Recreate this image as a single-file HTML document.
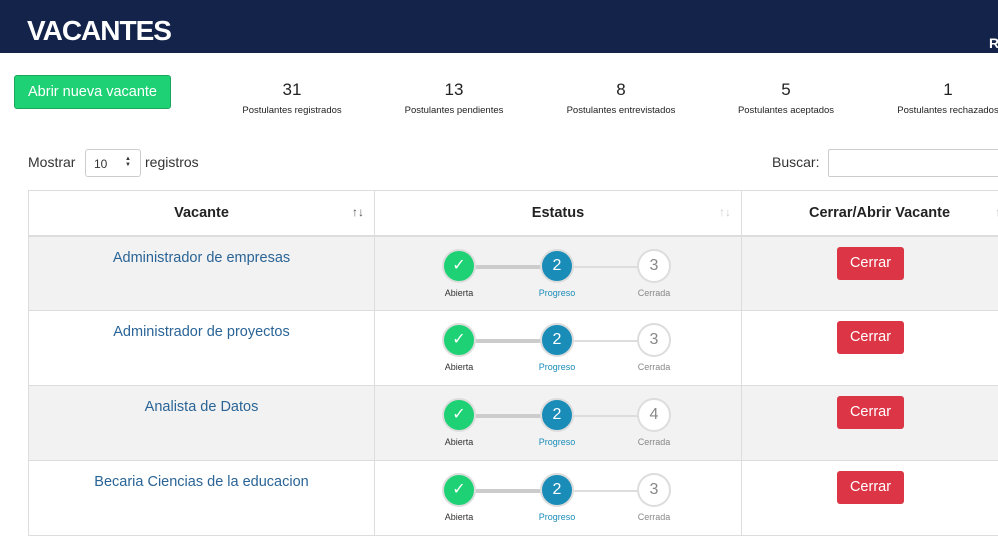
<!DOCTYPE html>
<html><head><meta charset="utf-8"><style>
*{box-sizing:border-box;margin:0;padding:0}
body{width:998px;height:532px;overflow:hidden;background:#fff;font-family:"Liberation Sans",sans-serif;position:relative;color:#333}
.hdr{position:absolute;left:0;top:0;width:998px;height:53px;background:#13234a}
.hdr h1{position:absolute;left:27px;top:15px;color:#fff;font-size:28px;font-weight:bold;letter-spacing:-1px}
.hdr .r{position:absolute;left:989px;top:35px;color:#fff;font-weight:bold;font-size:14px}
.btn{position:absolute;left:14px;top:75px;width:157px;height:34px;background:#1fd175;border:1px solid #17a85c;border-radius:3px;color:#fff;font-size:14.5px;text-align:center;line-height:32px}
.st{position:absolute;top:80px;text-align:center;width:160px}
.st b{display:block;font-weight:normal;font-size:17px;color:#222}
.st span{display:block;font-size:9.5px;color:#222;margin-top:5px}
.lbl{position:absolute;font-size:14px;color:#333}
.sel{position:absolute;left:85px;top:149px;width:56px;height:28px;border:1px solid #ccc;border-radius:3px;font-size:12px;padding:7px 0 0 8px}
.sel i{position:absolute;right:9px;top:6px;font-style:normal;font-size:6px;line-height:6px}
.inp{position:absolute;left:828px;top:149px;width:180px;height:28px;border:1px solid #ccc;border-radius:2px}
table{position:absolute;left:28px;top:190px;border-collapse:collapse;width:990px}
th{height:45px;border:1px solid #ddd;border-bottom:2px solid #ddd;font-size:14.5px;font-weight:bold;color:#222;position:relative}
th i{position:absolute;right:10px;top:14px;font-style:normal;font-weight:normal;font-size:12px;color:#555}
th i.l{color:#ccc}
td{height:75px;border:1px solid #ddd;vertical-align:top;position:relative}
tr.g td{background:#f2f2f2}
.v{text-align:center;color:#2a6496;font-size:14.5px;padding-top:13px}
.steps{position:relative;height:73px}
.line{position:absolute;top:28px;height:4px;background:#ddd}
.c{position:absolute;top:12px;width:34px;height:34px;border-radius:50%;text-align:center;line-height:30px;font-size:16px}
.c1{left:67px;background:#1fd175;color:#fff;border:2px solid #ddd}
.c2{left:165px;background:#1a8cb8;color:#fff;border:2px solid #ddd}
.c3{left:262px;background:#fff;color:#888;border:2px solid #ddd}
.sl{position:absolute;top:51px;font-size:9px;width:60px;text-align:center}
.rb{position:absolute;left:95px;top:10px;width:67px;height:33px;background:#dc3545;border-radius:3px;color:#fff;font-size:14.5px;text-align:center;line-height:33px}
</style></head><body>
<div class="hdr"><h1>VACANTES</h1><div class="r">R</div></div>
<div class="btn">Abrir nueva vacante</div>
<div class="st" style="left:212px"><b>31</b><span>Postulantes registrados</span></div>
<div class="st" style="left:374px"><b>13</b><span>Postulantes pendientes</span></div>
<div class="st" style="left:541px"><b>8</b><span>Postulantes entrevistados</span></div>
<div class="st" style="left:706px"><b>5</b><span>Postulantes aceptados</span></div>
<div class="st" style="left:868px"><b>1</b><span>Postulantes rechazados</span></div>
<div class="lbl" style="left:28px;top:154px">Mostrar</div>
<div class="sel">10<i>&#9650;<br>&#9660;</i></div>
<div class="lbl" style="left:145px;top:154px">registros</div>
<div class="lbl" style="left:772px;top:154px">Buscar:</div>
<div class="inp"></div>
<table>
<tr><th style="width:346px">Vacante<i>↑↓</i></th><th style="width:367px">Estatus<i class="l">↑↓</i></th><th>Cerrar/Abrir Vacante<i class="l">↑↓</i></th></tr>
<tr class="g"><td class="v">Administrador de empresas</td><td><div class="steps"><div class="line" style="left:100px;width:68px;background:#ccc"></div><div class="line" style="left:198px;width:66px;height:2px;top:29px"></div><div class="c c1">✓</div><div class="c c2">2</div><div class="c c3">3</div><div class="sl" style="left:54px">Abierta</div><div class="sl" style="left:152px;color:#1a8cb8">Progreso</div><div class="sl" style="left:249px;color:#888">Cerrada</div></div></td><td><div class="rb">Cerrar</div></td></tr>
<tr><td class="v">Administrador de proyectos</td><td><div class="steps"><div class="line" style="left:100px;width:68px;background:#ccc"></div><div class="line" style="left:198px;width:66px;height:2px;top:29px"></div><div class="c c1">✓</div><div class="c c2">2</div><div class="c c3">3</div><div class="sl" style="left:54px">Abierta</div><div class="sl" style="left:152px;color:#1a8cb8">Progreso</div><div class="sl" style="left:249px;color:#888">Cerrada</div></div></td><td><div class="rb">Cerrar</div></td></tr>
<tr class="g"><td class="v">Analista de Datos</td><td><div class="steps"><div class="line" style="left:100px;width:68px;background:#ccc"></div><div class="line" style="left:198px;width:66px;height:2px;top:29px"></div><div class="c c1">✓</div><div class="c c2">2</div><div class="c c3">4</div><div class="sl" style="left:54px">Abierta</div><div class="sl" style="left:152px;color:#1a8cb8">Progreso</div><div class="sl" style="left:249px;color:#888">Cerrada</div></div></td><td><div class="rb">Cerrar</div></td></tr>
<tr><td class="v">Becaria Ciencias de la educacion</td><td><div class="steps"><div class="line" style="left:100px;width:68px;background:#ccc"></div><div class="line" style="left:198px;width:66px;height:2px;top:29px"></div><div class="c c1">✓</div><div class="c c2">2</div><div class="c c3">3</div><div class="sl" style="left:54px">Abierta</div><div class="sl" style="left:152px;color:#1a8cb8">Progreso</div><div class="sl" style="left:249px;color:#888">Cerrada</div></div></td><td><div class="rb">Cerrar</div></td></tr>
</table>
</body></html>
